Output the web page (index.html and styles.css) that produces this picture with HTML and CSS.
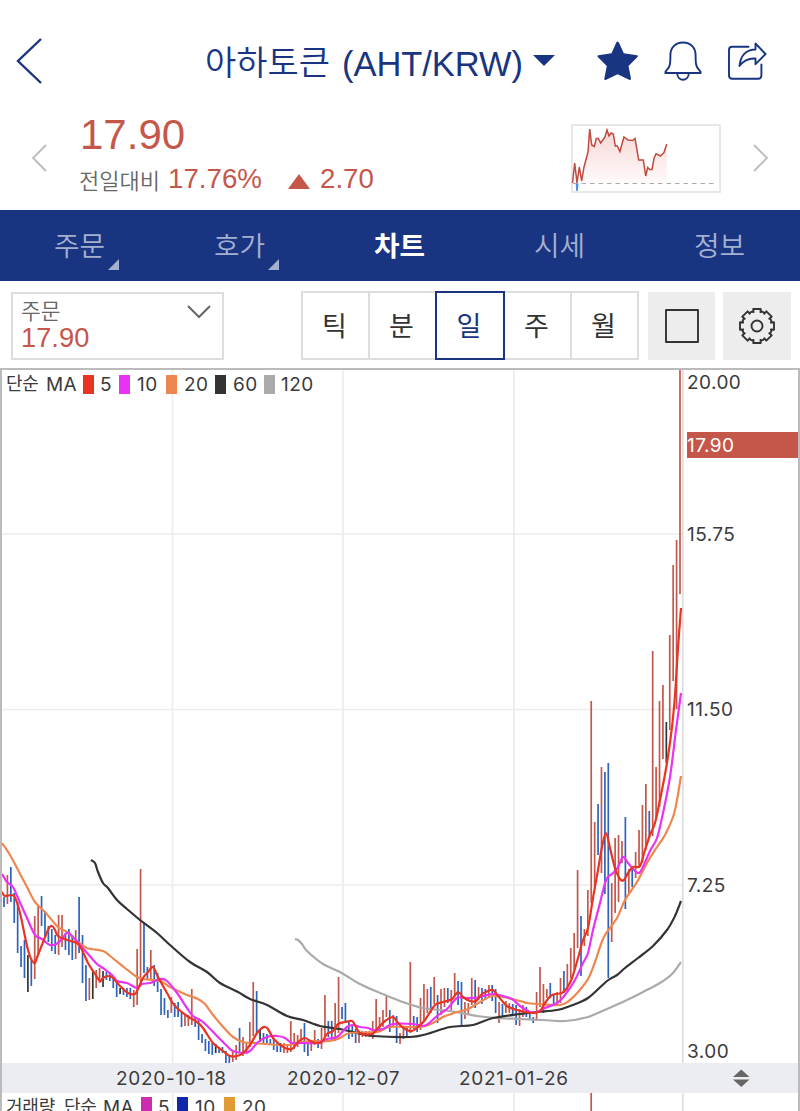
FILE: index.html
```html
<!DOCTYPE html>
<html lang="ko">
<head>
<meta charset="utf-8">
<title>아하토큰 (AHT/KRW)</title>
<link rel="stylesheet" href="styles.css">
</head>
<body>
<div class="app">
  <header class="header">
    <svg class="back" width="28" height="48" viewBox="0 0 28 48"><path d="M26 2 3 24 26 46"/></svg>
    <h1 class="title"><span class="title-ko">아하토큰</span> <span class="title-pair">(AHT/KRW)</span></h1>
    <svg class="caret" width="22" height="12" viewBox="0 0 22 12"><path d="M0 0H22L11 11Z"/></svg>
    <svg class="star" width="42" height="42" viewBox="0 0 42 42"><path d="M19.300 2.500Q20.600 .5 21.900 2.500L26.800 13.200 40 15.200Q41.500 15.600 40.500 17L31.500 26 34 38.500Q34 40.500 32.200 39.700L20.600 34.200 9.200 39.700Q7.200 40.500 7.300 38.500L9.800 26 .8 17Q-.2 15.600 1.400 15.200L14.500 13.200Z"/></svg>
    <svg class="line-icon bell" width="40" height="42" viewBox="0 0 40 42"><path d="M20 2.500C12 2.500 7.400 8 7.400 15.500C7.400 23 7.200 27 3.800 30Q2 31.600 2.300 33H37.700Q38 31.600 36.200 30C32.800 27 32.600 23 32.600 15.500C32.600 8 28 2.500 20 2.500ZM14.200 33C14.400 42 25.600 42 25.800 33"/></svg>
    <svg class="line-icon share" width="42" height="42" viewBox="0 0 42 42"><path d="M22.500 6.800H6.200Q3 6.800 3 10V35.500Q3 38.700 6.200 38.700H32.200Q35.400 38.700 35.400 35.500V24.500"/><path d="M29.500 3.500 39.500 14 29.500 24.200V18.500C22 18 17.500 20.500 13.500 26C14.500 16 20 9.500 29.500 9.500Z"/></svg>
  </header>

  <section class="summary">
    <svg class="step step-prev" width="16" height="28" viewBox="0 0 16 28"><path d="M15 1 2 14 15 27"/></svg>
    <div class="quote">
      <div class="price">17.90</div>
      <div class="change"><span class="change-label">전일대비</span><span class="rate">17.76%</span><svg class="up" width="22" height="15" viewBox="0 0 22 15"><path d="M11 0 22 15H0Z"/></svg><span>2.70</span></div>
    </div>
    <svg class="spark" width="150" height="69" viewBox="0 0 150 69">
      <defs><linearGradient id="fade" x1="0" y1="0" x2="0" y2="1"><stop offset="0" stop-color="#f6d6d6"/><stop offset="1" stop-color="#fffafa"/></linearGradient></defs>
      <rect class="spark-frame" x="1" y="1" width="148" height="67"/>
      <path class="spark-fill" d="M10.700 59 13 43 17 28 18.700 5 20.700 21 23.300 22.500 25.300 14.500H27.300L29.700 19 34 13 36 6 38 12 40.300 9 42.300 10 44.300 22H46.300L49 27.500 50.700 21 53 13 57 16 61.700 16.500 64 14.500 67.700 36H72.300L74.700 52 76.700 43.500 78.700 45.500H81L83 34.500 85 29.700 89.300 32 93 28.500 95.700 20V59Z"/>
      <path class="spark-base" d="M2 59.500H144"/>
      <path class="spark-dip" d="M5.500 59.500 6 67 6.800 59.500"/>
      <path class="spark-line" d="M1.500 59 3.700 39 6 59 8.300 43 10.700 57 13 43 17 28 18.700 5 20.700 21 23.300 22.500 25.300 14.500H27.300L29.700 19 34 13 36 6 38 12 40.300 9 42.300 10 44.300 22H46.300L49 27.500 50.700 21 53 13 57 16 61.700 16.500 64 14.500 67.700 36H72.300L74.700 52 76.700 43.500 78.700 45.500H81L83 34.500 85 29.700 89.300 32 93 28.500 95.700 20"/>
    </svg>
    <svg class="step step-next" width="16" height="28" viewBox="0 0 16 28"><path d="M1 1 14 14 1 27"/></svg>
  </section>

  <nav class="tabs">
    <a class="tab tab-more">주문</a>
    <a class="tab tab-more">호가</a>
    <a class="tab tab-active">차트</a>
    <a class="tab">시세</a>
    <a class="tab">정보</a>
  </nav>

  <div class="toolbar">
    <div class="order">
      <div><div class="order-label">주문</div><div class="order-price">17.90</div></div>
      <svg class="chevron" width="24" height="14" viewBox="0 0 24 14"><path d="M1 1 12 12 23 1"/></svg>
    </div>
    <div class="periods">
      <button class="period">틱</button><button class="period">분</button><button class="period period-on">일</button><button class="period">주</button><button class="period">월</button>
    </div>
    <button class="tool"><svg width="36" height="36" viewBox="0 0 36 36"><rect x="2" y="2" width="32" height="32"/></svg></button>
    <button class="tool tool-settings"><svg width="38" height="38" viewBox="0 0 38 38"><circle cx="19" cy="19" r="5.500"/><path id="gear"/></svg></button>
  </div>

  <main class="chart">
    <svg class="plot" width="796" height="693" viewBox="2 370 796 693">
      <path class="grid" d="M172.500 370V1063M343 370V1063M514 370V1063M2 534H682M2 709.500H682M2 885H682"/>
      <path class="axis" d="M682.800 370V1063"/>
      <g id="bars"></g>
      <g id="lines"></g>
      <rect class="now" x="687" y="432" width="111" height="26"/>
      <g class="ticks">
        <text x="687" y="389">20.00</text>
        <text class="now-text" x="687" y="452">17.90</text>
        <text x="687" y="541">15.75</text>
        <text x="687" y="716">11.50</text>
        <text x="687" y="892">7.25</text>
        <text x="687" y="1058">3.00</text>
      </g>
      <g class="ticks legend">
        <text class="ko" x="6" y="390">단순</text><text x="46" y="391">MA</text>
        <rect x="83" y="375" width="11" height="19" fill="#e93423"/><text x="100" y="391">5</text>
        <rect x="119" y="375" width="11" height="19" fill="#e834f2"/><text x="137" y="391">10</text>
        <rect x="166" y="375" width="11" height="19" fill="#ee874f"/><text x="184" y="391">20</text>
        <rect x="215" y="375" width="11" height="19" fill="#333"/><text x="233" y="391">60</text>
        <rect x="264" y="375" width="11" height="19" fill="#aaa"/><text x="281" y="391">120</text>
      </g>
    </svg>
    <svg class="dates" width="796" height="30" viewBox="2 1063 796 30">
      <g class="ticks date-ticks"><text x="116" y="1085">2020-10-18</text><text x="287" y="1085">2020-12-07</text><text x="459" y="1085">2021-01-26</text></g>
      <path class="sorter" d="M733 1077H749.500L741.300 1069.500ZM733 1079.500H749.500L741.300 1087Z"/>
    </svg>
    <svg class="volume" width="796" height="18" viewBox="2 1093 796 18">
      <path class="grid" d="M172.500 1093V1111M343 1093V1111M514 1093V1111"/>
      <path class="axis" d="M682.800 1093V1111"/>
      <path class="bar up-bar" d="M591.200 1093V1111"/>
      <g class="ticks">
        <text class="ko" x="6" y="1113">거래량</text><text class="ko" x="64" y="1113">단순</text><text x="103" y="1114">MA</text>
        <rect x="141" y="1097" width="11" height="19" fill="#cd2cb0"/><text x="158" y="1114">5</text>
        <rect x="177" y="1097" width="11" height="19" fill="#1028a8"/><text x="195" y="1114">10</text>
        <rect x="224" y="1097" width="11" height="19" fill="#e09b36"/><text x="242" y="1114">20</text>
      </g>
    </svg>
  </main>
</div>
<script src="chart.js"></script>
</body>
</html>
```
FILE: styles.css
```css
* { box-sizing: border-box; }
body { margin: 0; background: #fff; font-family: "Liberation Sans", "Noto Sans CJK KR", sans-serif; overflow: hidden; }
svg { display: block; flex: none; }
.app { width: 800px; height: 1111px; overflow: hidden; display: flex; flex-direction: column; }

.header { height: 112px; padding: 10px 0 0 15px; display: flex; align-items: center; color: #193582; }
.back path { fill: none; stroke: #193582; stroke-width: 2.4; }
.title { margin: 3px 0 0 162px; width: 318px; height: 50px; line-height: 50px; font-size: 34.5px; font-weight: 400; white-space: nowrap; display: flex; justify-content: space-between; }
.title-ko { font-family: "Noto Sans CJK KR", sans-serif; font-weight: 350; font-size: 34px; margin-top: -2px; }
.title-pair { letter-spacing: -.05px; margin-top: 1px; }
.caret { margin-left: 10px; fill: #193582; }
.star { margin-left: 42px; fill: #193582; }
.line-icon { fill: none; stroke: #193582; stroke-width: 1.9; stroke-linejoin: round; stroke-linecap: round; }
.bell { margin-left: 24px; }
.share { margin-left: 23px; }

.summary { height: 98px; display: flex; padding-left: 31px; color: #c5574a; }
.step { margin-top: 32px; fill: none; stroke: #bbb; stroke-width: 1.8; }
.quote { margin-left: 33px; width: 491px; white-space: nowrap; }
.price { font-size: 42px; line-height: 45px; }
.change { display: flex; align-items: center; height: 44px; font-size: 27.700px; }
.change-label { width: 80px; margin-top: -1px; margin-left: -1px; font-family: "Noto Sans CJK KR", sans-serif; font-size: 22px; font-weight: 350; color: #666; }
.rate { width: 120px; padding-left: 9px; }
.up { margin: 4px 10px 0 9px; fill: #c5574a; }
.spark { margin-top: 12px; }
.spark-frame { fill: #fff; stroke: #e6e6e6; stroke-width: 1.800; }
.spark-fill { fill: url(#fade); }
.spark-base { stroke: #aaa; stroke-width: 1.200; stroke-dasharray: 4.500 4; }
.spark-dip { fill: none; stroke: #4a90e2; stroke-width: 1.600; }
.spark-line { fill: none; stroke: #c14a40; stroke-width: 1.500; }
.step-prev { margin-left: 0; }
.step-next { margin-left: 32px; }

.tabs { height: 71px; background: #193582; display: grid; grid-template-columns: repeat(5, 1fr); color: #a3b0d0; font-family: "Noto Sans CJK KR", sans-serif; font-size: 27.800px; font-weight: 350; }
.tab { height: 71px; line-height: 69px; text-align: center; position: relative; padding-right: 1px; }
.tab-more::after { content: ""; position: absolute; right: 41px; bottom: 11px; border-left: 11px solid transparent; border-bottom: 11px solid #a3b0d0; }
.tab-active { color: #fff; font-weight: 700; }

.toolbar { height: 87px; padding: 11px 9px 0 11px; display: flex; }
.order { width: 213px; height: 68px; border: 2px solid #ddd; padding: 3px 11px 0 8px; display: flex; justify-content: space-between; margin-right: 77px; }
.order-label { font-family: "Noto Sans CJK KR", sans-serif; font-size: 21.500px; font-weight: 350; line-height: 26px; color: #666; }
.order-price { font-size: 27.300px; line-height: 30px; color: #c5574a; }
.chevron { margin-top: 8px; fill: none; stroke: #666; stroke-width: 2; }
.periods { display: flex; width: 338px; height: 69px; margin-top: -1px; border: 2px solid #ddd; margin-right: 9px; }
.period { flex: 1; margin: 0; padding: 0 2px 2px 0; border: 0; border-right: 2px solid #ddd; background: #fff; color: #333; font-family: "Noto Sans CJK KR", sans-serif; font-size: 27px; font-weight: 400; }
.period:last-child { border-right: 0; }
.period-on { flex: none; width: 70px; margin: -2px 0 -2px -2px; border: 2px solid #193582; color: #193582; }
.tool { width: 67px; height: 68px; border: 0; padding: 0; background: #ededed; display: flex; align-items: center; justify-content: center; }
.tool svg { fill: none; stroke: #333; stroke-width: 1.900; stroke-linejoin: round; }
.tool-settings { margin-left: 8px; width: 68px; }
.tool-settings svg { margin-bottom: 1px; }

.chart { border: 2px solid #bbb; border-bottom: 0; height: 743px; }
.grid { stroke: #ededee; stroke-width: 1.700; }
.axis { stroke: #ddd; stroke-width: 1.700; }
.bar { fill: none; stroke-width: 1.700; }
.up-bar { stroke: #c4574b; }
.down-bar { stroke: #2d62bd; }
.flat-bar { stroke: #333; }
.ma { fill: none; stroke-width: 2.200; }
.ticks { font-family: Inter, "Noto Sans CJK KR", sans-serif; font-size: 19px; fill: #3b3b3b; letter-spacing: .45px; }
.date-ticks { letter-spacing: .7px; }
.ko { font-family: "Noto Sans CJK KR", sans-serif; font-size: 18px; letter-spacing: -.2px; }
.now { fill: #c5574a; }
.ticks .now-text { fill: #fff; }
.dates { background: #ecedf2; }
.sorter { fill: #666; }
```
FILE: chart.js
```js
const NS = "http://www.w3.org/2000/svg";
function addPath(parent, d, cls, stroke) {
  const p = document.createElementNS(NS, "path");
  p.setAttribute("d", d);
  p.setAttribute("class", cls);
  if (stroke) p.setAttribute("stroke", stroke);
  parent.appendChild(p);
}

// Daily ranges: direction, top, bottom
const days = `b897-907 r875-904 b867-902 b893-923 b902-953 b946-967 b940-978 k955-992 b960-986 r916-979
r906-955 b896-926 b911-938 b926-942 b929-951 b935-954 r915-955 r915-947 b933-950 b929-955
b935-960 r930-959 b897-953 b935-983 b965-1001 r978-1000 k971-999 r970-988 r968-983 k971-987
b972-980 b972-981 b978-988 b982-997 k988-994 b988-995 b988-997 b988-999 r990-1007 r949-1005
r869-982 b922-973 b967-980 r950-979 b965-986 b973-992 b989-1015 b998-1015 b1010-1018 r997-1013
b1003-1017 b1002-1017 b1013-1027 r1014-1026 r1015-1026 r989-1025 b1017-1027 b1018-1040 b1034-1043 b1039-1051
b1041-1054 b1043-1055 k1044-1053 b1047-1053 b1047-1053 b1051-1063 b1055-1063 r1051-1062 r1045-1060 b1028-1053
r1037-1056 r1042-1053 r1022-1047 r982-1036 b991-1034 k1030-1042 b1033-1043 b1034-1043 b1039-1045 b1038-1050
b1042-1052 b1043-1052 r1043-1053 r1045-1053 r1021-1052 r1033-1049 r1035-1047 r1029-1043 b1023-1052 b1042-1056
r1040-1051 r1030-1045 b1039-1048 r1028-1049 r995-1037 b1021-1037 b1021-1041 r1003-1041 r977-1033 b1007-1019
b1003-1023 b1022-1039 b1026-1037 b1029-1043 r1031-1043 r1031-1037 r1031-1037 r1031-1037 r1021-1039 r999-1030
r1017-1032 r1010-1027 r995-1017 b1010-1032 r1015-1027 b1016-1043 r1033-1044 r1027-1039 b1027-1037 r962-1033
b1016-1029 b1017-1032 r998-1030 r984-1020 r989-1013 b987-1013 r977-1004 b995-1023 r989-1015 r988-1007
b988-1003 r990-1010 r973-995 b981-1005 b982-1026 r1002-1019 r1003-1015 r978-1005 b980-1008 r987-1000
b988-1004 b989-1000 r985-998 b985-1001 b989-1013 r1002-1023 b1004-1016 r1001-1013 r1003-1013 b1004-1015
b1005-1025 r1009-1026 r1005-1017 b1007-1017 b1012-1019 b1017-1023 r992-1021 r967-1007 r984-1013 r989-998
b983-998 b994-1005 r992-1006 r978-1003 b971-993 r964-992 r948-978 r933-970 r870-948 b916-976
r929-946 r890-936 r701-903 r822-887 b804-855 r767-873 b772-894 b763-978 r883-942 r838-913
r835-902 r841-863 b817-909 r869-895 b867-887 r852-878 r830-868 r805-863 r784-850 b811-838
r651-836 r767-820 r701-807 r685-759 k722-763 r635-730 r565-681 r540-709 r370-594`.split(/\s+/);
const kinds = { r: "up-bar", b: "down-bar", k: "flat-bar" };
const step = (680 - 4) / (days.length - 1);
const bars = document.getElementById("bars");
days.forEach((day, i) => {
  const [top, bottom] = day.slice(1).split("-");
  addPath(bars, `M${(4 + i * step).toFixed(2)} ${top}V${bottom}`, "bar " + kinds[day[0]]);
});

// Moving averages, smoothed through their points
const averages = [
  ["#aaa", "295,939 298,940 302,944 307,951 323,964 340,972 360,984 380,993 400,1001 423,1008 450,1011 477,1016 497,1018 520,1019 543,1020 565,1021 588,1017 607,1009 627,1000 643,992 660,983 672,974 681,962"],
  ["#333", "91,860 95,863 98,872 103,883 108,888 117,900 127,909 140,920 157,933 170,945 190,962 207,972 220,983 238,992 250,999 267,1005 287,1016 303,1020 320,1026 340,1029 357,1033 373,1036 410,1037 427,1034 450,1027 473,1025 493,1018 520,1014 537,1012 557,1010 570,1006 588,998 607,981 617,975 625,968 638,958 653,946 667,930 675,916 681,901"],
  ["#ee874f", "2,843 10,855 18,870 27,887 35,902 45,912 58,927 67,932 77,941 87,948 103,951 110,956 125,968 137,977 143,979 160,981 170,987 187,995 198,999 205,1004 213,1015 225,1029 233,1037 243,1042 253,1043 287,1045 300,1042 313,1041 330,1041 340,1038 350,1033 377,1032 390,1027 420,1027 433,1023 443,1017 457,1012 468,1009 480,1002 492,996 503,997 520,1001 527,1003 537,1004 560,1005 570,1000 578,992 588,979 595,962 600,947 605,935 617,918 625,900 637,882 647,863 657,847 665,835 673,817 677,800 681,776"],
  ["#e834f2", "2,874 7,882 13,887 18,898 27,918 35,935 42,939 50,945 58,943 67,933 72,936 80,945 88,954 97,964 103,968 112,975 117,981 127,983 137,988 142,984 150,983 160,979 167,981 177,993 187,1008 193,1016 203,1022 217,1036 227,1046 233,1051 243,1053 250,1051 258,1042 267,1037 277,1036 285,1038 292,1043 303,1043 317,1043 327,1039 337,1037 347,1027 353,1025 360,1027 368,1028 373,1030 383,1029 393,1024 413,1024 423,1026 428,1024 437,1016 447,1009 457,998 465,998 475,998 483,996 493,994 503,996 512,999 520,1006 530,1012 537,1012 545,1008 557,1003 565,995 575,980 583,963 588,953 593,930 600,903 605,883 608,877 613,873 618,867 623,857 628,863 635,871 639,873 643,867 650,851 657,838 663,813 670,777 676,730 681,693"],
  ["#e93423", "2,892 5,896 14,896 20,913 28,950 34,963 38,955 48,930 52,926 55,930 58,936 67,940 77,943 82,950 88,963 95,974 100,981 103,978 108,976 113,978 120,986 128,993 135,994 138,989 143,978 148,972 153,967 158,977 167,993 172,1002 177,1008 187,1016 197,1022 203,1028 213,1043 223,1051 230,1056 237,1056 243,1053 250,1045 257,1033 262,1028 265,1027 268,1029 273,1038 278,1043 285,1048 292,1049 298,1042 305,1038 312,1042 317,1043 322,1042 327,1034 333,1031 338,1024 345,1022 352,1021 355,1025 360,1033 372,1034 378,1028 385,1021 393,1017 398,1023 405,1029 412,1031 418,1027 425,1020 435,1005 443,1002 452,999 458,992 463,997 470,1001 476,1001 482,994 488,991 493,990 498,996 507,1006 517,1010 525,1012 533,1013 540,1011 545,1003 552,995 562,993 567,988 572,978 578,958 583,940 588,928 593,898 598,870 602,847 606,833 610,848 615,868 620,879 624,880 628,873 633,867 640,866 645,850 650,835 655,823 660,800 667,763 672,727 675,695 678,648 681,608"]
];
const lines = document.getElementById("lines");
averages.forEach(([color, list]) => {
  const p = list.split(" ").map(s => s.split(",").map(Number));
  let d = "M" + p[0];
  for (let i = 0; i < p.length - 1; i++) {
    const a = p[i - 1] || p[i], b = p[i], c = p[i + 1], e = p[i + 2] || c;
    d += `C${b[0] + (c[0] - a[0]) / 6} ${b[1] + (c[1] - a[1]) / 6} ${c[0] - (e[0] - b[0]) / 6} ${c[1] - (e[1] - b[1]) / 6} ${c[0]} ${c[1]}`;
  }
  addPath(lines, d, "ma", color);
});

// Eight-toothed settings gear
const gear = [];
for (let i = 0; i < 8; i++) {
  [[-19, 15.200], [-14, 14.300], [-12.500, 17.400], [12.500, 17.400], [14, 14.300], [19, 15.200]].forEach(([deg, r]) => {
    const t = (i * 45 + deg) * Math.PI / 180;
    gear.push((19 + r * Math.sin(t)).toFixed(2) + " " + (19 - r * Math.cos(t)).toFixed(2));
  });
}
document.getElementById("gear").setAttribute("d", "M" + gear.join("L") + "Z");
```
